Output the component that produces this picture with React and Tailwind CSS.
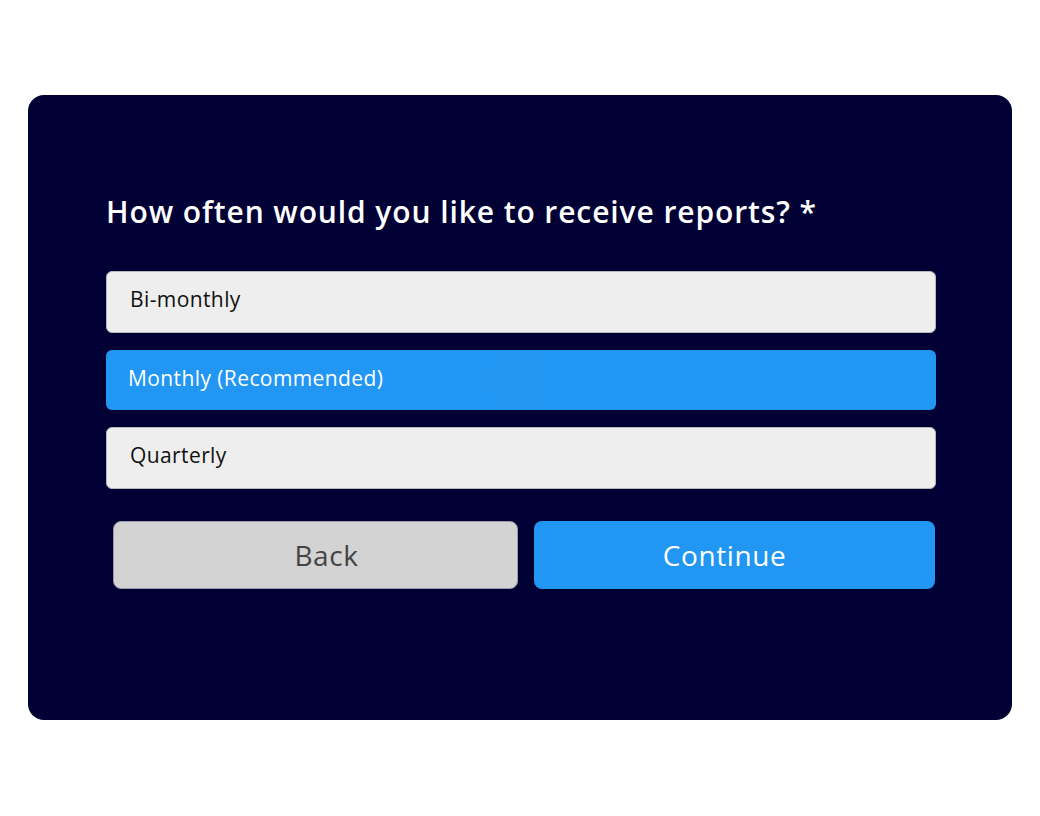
import { useState } from "react";

const options = ["Bi-monthly", "Monthly (Recommended)", "Quarterly"];

export default function App() {
  const [picked, setPicked] = useState(1);

  return (
    <div className="min-h-screen bg-white pt-[95px] px-[28px]" style={{ fontFamily: '"Open Sans", "Noto Sans", sans-serif' }}>
      <div className="h-[625px] w-[984px] rounded-2xl bg-[#000035] pl-[78px] pr-[76px] pt-[92px]">
        <h2 className="text-[30px] font-semibold leading-[50px] tracking-[0.9px] text-white">
          How often would you like to receive reports? *
        </h2>

        <div className="mt-[34px] flex flex-col gap-[16px]">
          {options.map((o, i) =>
            picked === i ? (
              <button
                key={o}
                type="button"
                onClick={() => setPicked(i)}
                className="relative my-[1px] h-[60px] overflow-hidden rounded-md bg-[#2196f3] pb-[3px] pl-[22px] text-left text-[21px] tracking-[0.4px] text-white"
              >
                {o}
                <span className="absolute left-[384px] top-[2px] h-[56px] w-[56px] rounded-full bg-white/[0.015]" />
              </button>
            ) : (
              <button
                key={o}
                type="button"
                onClick={() => setPicked(i)}
                className="h-[62px] rounded-md border border-[#b5b5bd] bg-[#eeeeee] pb-[5px] pl-[23px] text-left text-[21px] tracking-[0.4px] text-[#111]"
              >
                {o}
              </button>
            )
          )}
        </div>

        <div className="mt-[32px] flex gap-[16px] pl-[7px] pr-px">
          <button
            type="button"
            className="h-[68px] flex-1 rounded-lg border border-[#9a9aa8] bg-[#d3d3d3] pl-[22px] text-[28px] tracking-[0.6px] text-[#444]"
          >
            Back
          </button>
          <button
            type="button"
            className="h-[68px] flex-1 rounded-lg bg-[#2196f3] pr-[20px] text-[28px] tracking-[0.6px] text-white"
          >
            Continue
          </button>
        </div>
      </div>
    </div>
  );
}
